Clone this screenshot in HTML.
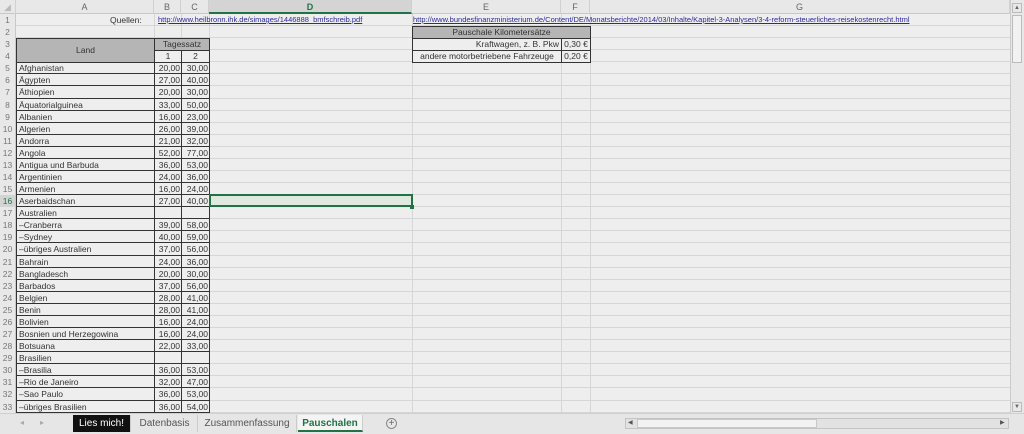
<!DOCTYPE html>
<html><head><meta charset="utf-8"><style>
*{margin:0;padding:0;box-sizing:border-box}
body{width:1024px;height:434px;overflow:hidden;background:#eeeeee;font-family:"Liberation Sans",sans-serif;font-size:8.5px;color:#333;position:relative}
.abs{position:absolute}
#hdr{left:0;top:0;width:1010px;height:14px;background:#e8e8e8;border-bottom:1px solid #c8c8c8}
#hdr span{position:absolute;top:0;height:14px;line-height:14px;text-align:center;color:#666;font-size:9px;border-right:1px solid #d0d0d0}
.vl{position:absolute;top:14px;height:399px;width:1px;background:#d6d6d6}
#rows{left:0;top:14px;width:1010px}
.r{position:relative;height:12.09px;line-height:12px;white-space:nowrap}
.r::before{content:"";position:absolute;left:16px;right:0;bottom:0;height:1px;background:#d6d6d6}
#rows .r:nth-child(n+5)::after{content:"";position:absolute;left:16px;width:194px;bottom:0;height:1px;background:#333}
.r i{position:absolute;left:0;width:16px;height:12.09px;background:#e8e8e8;color:#777;font-style:normal;text-align:center;border-right:1px solid #c8c8c8;font-size:8.5px;z-index:1}
.r .a{position:absolute;left:19px}
.r .b{position:absolute;left:154px;width:26px;text-align:right}
.r .c{position:absolute;left:181px;width:27px;text-align:right}
.lnk{color:#2a2aa0;text-decoration:underline;font-size:7.5px}
#tblb{left:16px;top:62px;width:194px;height:351px;border:1px solid #333}
.bl{position:absolute;width:1px;background:#333}
.gry{position:absolute;background:#b5b5b5;border:1px solid #333;text-align:center;color:#333;z-index:2}
.wc{position:absolute;border:1px solid #333;text-align:center;background:#eee;z-index:2}
#tabs{left:0;top:413px;width:1024px;height:21px;background:#e6e6e6;border-top:1px solid #cfcfcf}
.tab{position:absolute;top:1px;height:17px;line-height:17px;font-size:10px;color:#555;text-align:center;border-right:1px solid #ccc}
</style></head><body>
<div class="vl" style="left:154px"></div><div class="vl" style="left:181px"></div><div class="vl" style="left:209px"></div><div class="vl" style="left:412px"></div><div class="vl" style="left:561px"></div><div class="vl" style="left:590px"></div>
<div id="hdr" class="abs">
<span style="left:0;width:16px;color:#bbb">◢</span>
<span style="left:16px;width:138px">A</span>
<span style="left:154px;width:27px">B</span>
<span style="left:181px;width:28px">C</span>
<span style="left:209px;width:203px;background:#d4d4d4;color:#217346;font-weight:bold;border-bottom:2px solid #217346">D</span>
<span style="left:412px;width:149px">E</span>
<span style="left:561px;width:29px">F</span>
<span style="left:590px;width:420px">G</span>
</div>
<div id="rows" class="abs">
<div class="r"><i>1</i><span style="position:absolute;left:110px">Quellen:</span><span class="lnk" style="position:absolute;left:158px">http://www.heilbronn.ihk.de/simages/1446888_bmfschreib.pdf</span><span class="lnk" style="position:absolute;left:413px">http://www.bundesfinanzministerium.de/Content/DE/Monatsberichte/2014/03/Inhalte/Kapitel-3-Analysen/3-4-reform-steuerliches-reisekostenrecht.html</span></div>
<div class="r"><i>2</i></div>
<div class="r"><i>3</i></div>
<div class="r"><i>4</i></div>
<div class="r"><i>5</i><span class="a">Afghanistan</span><span class="b">20,00</span><span class="c">30,00</span></div>
<div class="r"><i>6</i><span class="a">Ägypten</span><span class="b">27,00</span><span class="c">40,00</span></div>
<div class="r"><i>7</i><span class="a">Äthiopien</span><span class="b">20,00</span><span class="c">30,00</span></div>
<div class="r"><i>8</i><span class="a">Äquatorialguinea</span><span class="b">33,00</span><span class="c">50,00</span></div>
<div class="r"><i>9</i><span class="a">Albanien</span><span class="b">16,00</span><span class="c">23,00</span></div>
<div class="r"><i>10</i><span class="a">Algerien</span><span class="b">26,00</span><span class="c">39,00</span></div>
<div class="r"><i>11</i><span class="a">Andorra</span><span class="b">21,00</span><span class="c">32,00</span></div>
<div class="r"><i>12</i><span class="a">Angola</span><span class="b">52,00</span><span class="c">77,00</span></div>
<div class="r"><i>13</i><span class="a">Antigua und Barbuda</span><span class="b">36,00</span><span class="c">53,00</span></div>
<div class="r"><i>14</i><span class="a">Argentinien</span><span class="b">24,00</span><span class="c">36,00</span></div>
<div class="r"><i>15</i><span class="a">Armenien</span><span class="b">16,00</span><span class="c">24,00</span></div>
<div class="r"><i style="color:#217346;background:#d4d4d4">16</i><span class="a">Aserbaidschan</span><span class="b">27,00</span><span class="c">40,00</span></div>
<div class="r"><i>17</i><span class="a">Australien</span></div>
<div class="r"><i>18</i><span class="a">–Cranberra</span><span class="b">39,00</span><span class="c">58,00</span></div>
<div class="r"><i>19</i><span class="a">–Sydney</span><span class="b">40,00</span><span class="c">59,00</span></div>
<div class="r"><i>20</i><span class="a">–übriges Australien</span><span class="b">37,00</span><span class="c">56,00</span></div>
<div class="r"><i>21</i><span class="a">Bahrain</span><span class="b">24,00</span><span class="c">36,00</span></div>
<div class="r"><i>22</i><span class="a">Bangladesch</span><span class="b">20,00</span><span class="c">30,00</span></div>
<div class="r"><i>23</i><span class="a">Barbados</span><span class="b">37,00</span><span class="c">56,00</span></div>
<div class="r"><i>24</i><span class="a">Belgien</span><span class="b">28,00</span><span class="c">41,00</span></div>
<div class="r"><i>25</i><span class="a">Benin</span><span class="b">28,00</span><span class="c">41,00</span></div>
<div class="r"><i>26</i><span class="a">Bolivien</span><span class="b">16,00</span><span class="c">24,00</span></div>
<div class="r"><i>27</i><span class="a">Bosnien und Herzegowina</span><span class="b">16,00</span><span class="c">24,00</span></div>
<div class="r"><i>28</i><span class="a">Botsuana</span><span class="b">22,00</span><span class="c">33,00</span></div>
<div class="r"><i>29</i><span class="a">Brasilien</span></div>
<div class="r"><i>30</i><span class="a">–Brasilia</span><span class="b">36,00</span><span class="c">53,00</span></div>
<div class="r"><i>31</i><span class="a">–Rio de Janeiro</span><span class="b">32,00</span><span class="c">47,00</span></div>
<div class="r"><i>32</i><span class="a">–Sao Paulo</span><span class="b">36,00</span><span class="c">53,00</span></div>
<div class="r"><i>33</i><span class="a">–übriges Brasilien</span><span class="b">36,00</span><span class="c">54,00</span></div>
</div>
<div id="tblb" class="abs"></div>
<div class="bl" style="left:154px;top:38px;height:375px"></div>
<div class="bl" style="left:181px;top:50px;height:363px"></div>
<div class="gry" style="left:16px;top:38.18px;width:139px;height:25px;line-height:23px">Land</div>
<div class="gry" style="left:154px;top:38.18px;width:56px;height:13px;line-height:11px">Tagessatz</div>
<div class="wc" style="left:154px;top:50.27px;width:28px;height:13px;line-height:11px">1</div>
<div class="wc" style="left:181px;top:50.27px;width:29px;height:13px;line-height:11px">2</div>
<div class="gry" style="left:412px;top:26.09px;width:179px;height:13px;line-height:11px">Pauschale Kilometersätze</div>
<div class="wc" style="left:412px;top:38.18px;width:150px;height:13px;line-height:11px;text-align:right;padding-right:2px">Kraftwagen, z. B. Pkw</div>
<div class="wc" style="left:561px;top:38.18px;width:30px;height:13px;line-height:11px">0,30 €</div>
<div class="wc" style="left:412px;top:50.27px;width:150px;height:13px;line-height:11px">andere motorbetriebene Fahrzeuge</div>
<div class="wc" style="left:561px;top:50.27px;width:30px;height:13px;line-height:11px">0,20 €</div>
<div class="abs" style="left:209px;top:194.4px;width:204px;height:13px;border:2px solid #217346;background:rgba(200,225,200,0.4)"></div>
<div class="abs" style="left:410px;top:205px;width:4px;height:4px;background:#217346"></div>
<div class="abs" style="left:1010px;top:0;width:14px;height:413px;background:#e8e8e8;border-left:1px solid #ccc"></div>
<div class="abs" style="left:1012px;top:3px;width:10px;height:10px;border:1px solid #bbb;font-size:6px;text-align:center;line-height:9px;color:#666">▲</div>
<div class="abs" style="left:1012px;top:15px;width:10px;height:48px;border:1px solid #bbb;background:#f2f2f2"></div>
<div class="abs" style="left:1012px;top:402px;width:10px;height:10px;border:1px solid #bbb;font-size:6px;text-align:center;line-height:9px;color:#666">▼</div>
<div id="tabs" class="abs">
<span class="abs" style="left:20px;top:4px;color:#aaa;font-size:8px">◂</span>
<span class="abs" style="left:40px;top:4px;color:#aaa;font-size:8px">▸</span>
<div class="tab" style="left:73px;width:58px;background:#111;color:#fff">Lies mich!</div>
<div class="tab" style="left:132px;width:66px">Datenbasis</div>
<div class="tab" style="left:198px;width:99px">Zusammenfassung</div>
<div class="tab" style="left:298px;width:65px;background:#f4f4f4;color:#217346;font-weight:bold;border-bottom:2px solid #217346">Pauschalen</div>
<div class="abs" style="left:386px;top:4px;width:11px;height:11px;border:1px solid #888;border-radius:50%;text-align:center;line-height:9px;font-size:10px;color:#666">+</div>
<div class="abs" style="left:625px;top:4px;width:384px;height:11px;border:1px solid #c4c4c4;background:#e2e2e2"></div>
<div class="abs" style="left:637px;top:5px;width:180px;height:9px;background:#f2f2f2;border:1px solid #c8c8c8"></div>
<span class="abs" style="left:628px;top:5px;font-size:6px;color:#555">◀</span>
<span class="abs" style="left:1000px;top:5px;font-size:6px;color:#555">▶</span>
</div>
</body></html>
